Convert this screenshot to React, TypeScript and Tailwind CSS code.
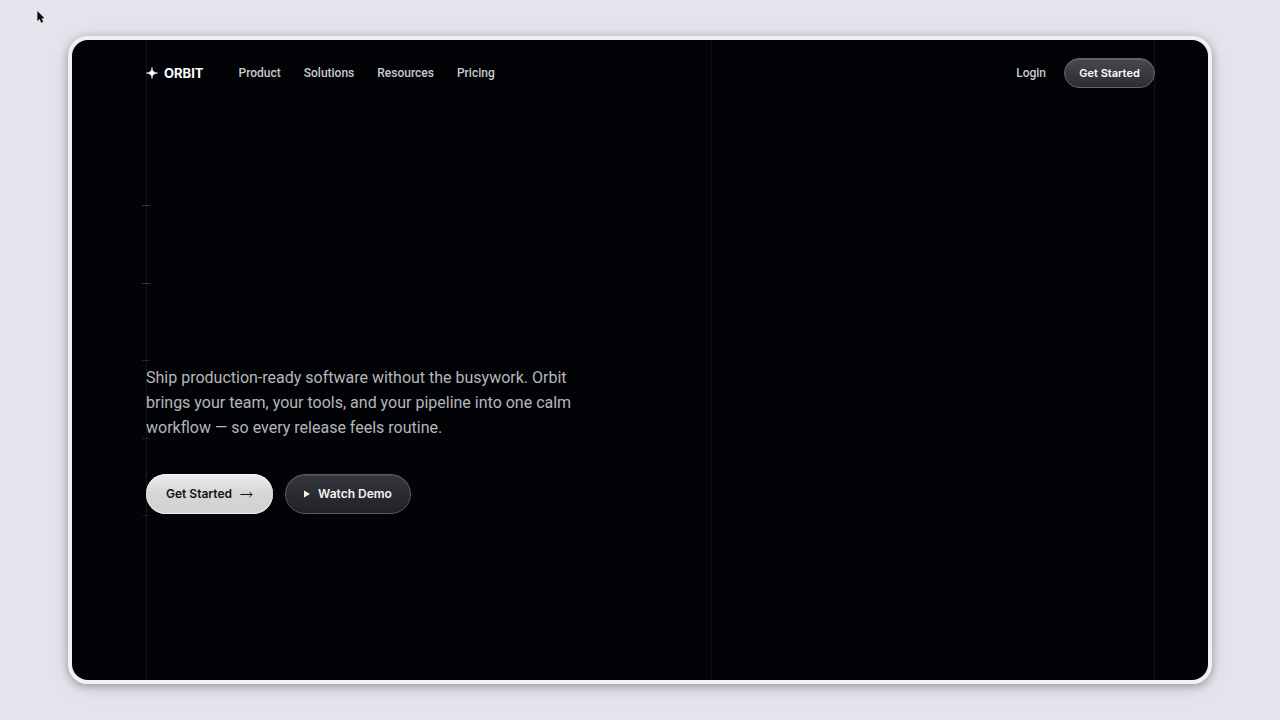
import React from "react";

const NAV_LINKS = [
  { href: "#product", label: "Product" },
  { href: "#solutions", label: "Solutions" },
  { href: "#resources", label: "Resources" },
  { href: "#pricing", label: "Pricing" },
];

// Tick marks fade out towards the bottom of the left rail
const TICKS = [
  "bg-white/20",
  "bg-white/20",
  "bg-white/12",
  "bg-white/12",
  "bg-white/8",
];

function Cursor() {
  return (
    <svg
      viewBox="0 0 7 12"
      className="absolute left-[37px] top-[11px] w-[7px] h-[12px] z-20"
      aria-hidden="true"
    >
      <path
        d="M0.6 0.4 L0.6 9.6 L2.7 7.7 L4.2 11.4 L5.9 10.7 L4.4 7.2 L7 6.9 Z"
        fill="#08080b"
        stroke="#08080b"
        strokeWidth="0.4"
      />
    </svg>
  );
}

function Guides() {
  return (
    <div
      aria-hidden="true"
      className="absolute inset-y-0 left-[74px] right-[53px] border-x border-white/8 pointer-events-none"
    >
      <div className="absolute inset-y-0 left-[56%] w-px bg-white/5" />
      <div className="absolute -left-[5px] top-[165px] h-[311px] flex flex-col justify-between">
        {TICKS.map((tone, i) => (
          <span key={i} className={`block w-2 h-px ${tone}`} />
        ))}
      </div>
    </div>
  );
}

function Navbar() {
  return (
    <header className="flex items-center justify-between pt-[18px]">
      <div className="flex items-center">
        <a
          href="#home"
          className="flex items-center gap-[6px] text-[13px] leading-5 font-bold text-white"
        >
          <svg viewBox="0 0 12 12" className="w-3 h-3" aria-hidden="true">
            <path
              d="M6 0.4 C6.4 3.9 7.2 5.2 11.6 6 C7.2 6.8 6.4 8.1 6 11.6 C5.6 8.1 4.8 6.8 0.4 6 C4.8 5.2 5.6 3.9 6 0.4 Z"
              fill="currentColor"
              stroke="currentColor"
              strokeWidth="0.6"
            />
          </svg>
          ORBIT
        </a>
        <nav className="ml-[35px] flex items-center gap-[23px]">
          {NAV_LINKS.map((link) => (
            <a
              key={link.href}
              href={link.href}
              className="font-['Roboto',sans-serif] text-[12px] leading-5 font-medium text-[#cacacc] hover:text-white transition-colors"
            >
              {link.label}
            </a>
          ))}
        </nav>
      </div>

      <div className="flex items-center gap-[18px]">
        <a
          href="#login"
          className="font-['Roboto',sans-serif] text-[12px] leading-5 font-medium text-[#cacacc] hover:text-white transition-colors"
        >
          Login
        </a>
        <button
          type="button"
          className="h-[30px] min-w-[91px] rounded-full border border-[#66666a] bg-gradient-to-b from-[#48494d] to-[#2c2d31] text-[11px] leading-4 font-semibold text-white shadow-[inset_0_1px_0_rgba(255,255,255,0.12)]"
        >
          Get Started
        </button>
      </div>
    </header>
  );
}

export default function App() {
  return (
    <div className="relative min-h-screen flex bg-[#e4e4ed] px-[68px] py-9 font-['Inter',sans-serif] antialiased">
      <Cursor />
      <div className="relative flex-1 flex flex-col overflow-hidden rounded-[20px] border-4 border-[#f1f1f4] bg-clip-padding shadow-[0_2px_8px_rgba(0,0,0,0.32),0_4px_24px_rgba(0,0,0,0.08)]">
        <div className="relative flex-1 flex flex-col bg-[#020307]">
          <Guides />
          <div className="relative flex-1 flex flex-col pl-[74px] pr-[53px]">
            <Navbar />

            <main className="flex-1 flex flex-col justify-end pb-[166px]">
              <p className="max-w-[440px] font-['Roboto',sans-serif] text-[16px] leading-[25px] text-[#b6b6b9]">
                Ship production-ready software without the busywork. Orbit
                brings your team, your tools, and your pipeline into one calm
                workflow — so every release feels routine.
              </p>

              <div className="mt-[34px] flex items-center gap-3">
                <button
                  type="button"
                  className="h-10 min-w-[127px] flex items-center justify-center gap-2 rounded-full bg-gradient-to-b from-[#ececec] via-[#d6d6d6] to-[#d0d0d0] text-[12px] leading-5 font-semibold text-[#111114] shadow-[inset_0_1px_1px_#fafafa,inset_0_-1px_1px_#f2f2f2]"
                >
                  Get Started
                  <svg
                    viewBox="0 0 13 8"
                    className="w-[13px] h-2"
                    fill="none"
                    stroke="currentColor"
                    strokeLinecap="round"
                    strokeLinejoin="round"
                    aria-hidden="true"
                  >
                    <path d="M0.8 4.5 H12 M9.8 2.4 L12 4.5 L9.8 6.6" />
                  </svg>
                </button>
                <button
                  type="button"
                  className="h-10 min-w-[126px] flex items-center justify-center gap-2 rounded-full border border-[#58585e] bg-gradient-to-b from-[#34353b] to-[#222329] text-[12px] leading-5 font-semibold text-[#f4f4f5] shadow-[inset_0_1px_0_rgba(255,255,255,0.1)]"
                >
                  <svg
                    viewBox="0 0 6 8"
                    className="w-[6px] h-2"
                    aria-hidden="true"
                  >
                    <path d="M0 0.6 L6 4 L0 7.4 Z" fill="currentColor" />
                  </svg>
                  Watch Demo
                </button>
              </div>
            </main>
          </div>
        </div>
      </div>
    </div>
  );
}
